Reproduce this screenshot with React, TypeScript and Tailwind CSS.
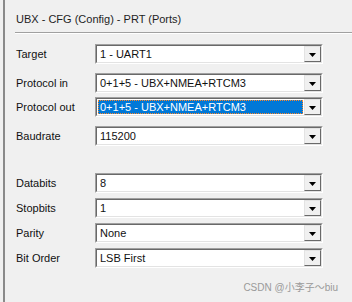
const rows = [
  { label: "Target", value: "1 - UART1", gap: "mt-[10px]" },
  { label: "Protocol in", value: "0+1+5 - UBX+NMEA+RTCM3", gap: "mt-[9px]" },
  { label: "Protocol out", value: "0+1+5 - UBX+NMEA+RTCM3", gap: "mt-[4px]", selected: true },
  { label: "Baudrate", value: "115200", gap: "mt-[9px]" },
  { label: "Databits", value: "8", gap: "mt-[27px]" },
  { label: "Stopbits", value: "1", gap: "mt-[5px]" },
  { label: "Parity", value: "None", gap: "mt-[5px]" },
  { label: "Bit Order", value: "LSB First", gap: "mt-[5px]" },
];

function Combo({ value, selected }: { value: string; selected?: boolean }) {
  return (
    <div className="w-[228px] h-[20px] border border-t-[#a0a0a0] border-l-[#a0a0a0] border-r-white border-b-white">
      <div className="h-full flex bg-white border border-t-[#696969] border-l-[#696969] border-r-[#e3e3e3] border-b-[#e3e3e3]">
        {selected ? (
          <div className="flex-1 m-px bg-[#0078d7] border border-dotted border-[#ff8728] text-white pl-[1px] flex items-center leading-[12px]">
            {value}
          </div>
        ) : (
          <div className="flex-1 pl-[3px] flex items-center leading-[12px]">{value}</div>
        )}
        <div className="w-[17px] h-full bg-[#f0f0f0] border border-t-[#e3e3e3] border-l-[#e3e3e3] border-r-[#696969] border-b-[#696969] flex items-center justify-center">
          <svg width="7" height="4" viewBox="0 0 7 4" className="mt-[2px]">
            <path d="M0 0h7L3.5 4z" fill="#000" />
          </svg>
        </div>
      </div>
    </div>
  );
}

export default function App() {
  return (
    <div
      className="relative w-[352px] h-[302px] bg-[#f0f0f0] flex text-[11px] text-[#111] overflow-hidden"
      style={{ fontFamily: '"Liberation Sans", Arial, sans-serif' }}
    >
      <div className="ml-[3px] w-[2px] h-full bg-[#8a8a8a]" />
      <div className="flex-1 flex flex-col">
        {/* Title */}
        <div className="pt-[13px] pl-[11px] leading-[13px] text-[#1e1e1e]">
          UBX - CFG (Config) - PRT (Ports)
        </div>
        <div className="mt-[6px] ml-[10px] h-[2px] border-t border-t-[#a0a0a0] border-b border-b-white" />

        {rows.map((row) => (
          <div key={row.label} className={`${row.gap} pl-[11px] flex items-center`}>
            <div className="w-[79px] leading-[13px]">{row.label}</div>
            <Combo value={row.value} selected={row.selected} />
          </div>
        ))}
      </div>

      <div
        className="absolute right-[14px] bottom-[8px] text-[10px] leading-[12px] text-[#9a9a9a]"
        style={{ fontFamily: '"Liberation Sans", "Noto Sans CJK SC", sans-serif' }}
      >
        CSDN @小李子～biu
      </div>
    </div>
  );
}
